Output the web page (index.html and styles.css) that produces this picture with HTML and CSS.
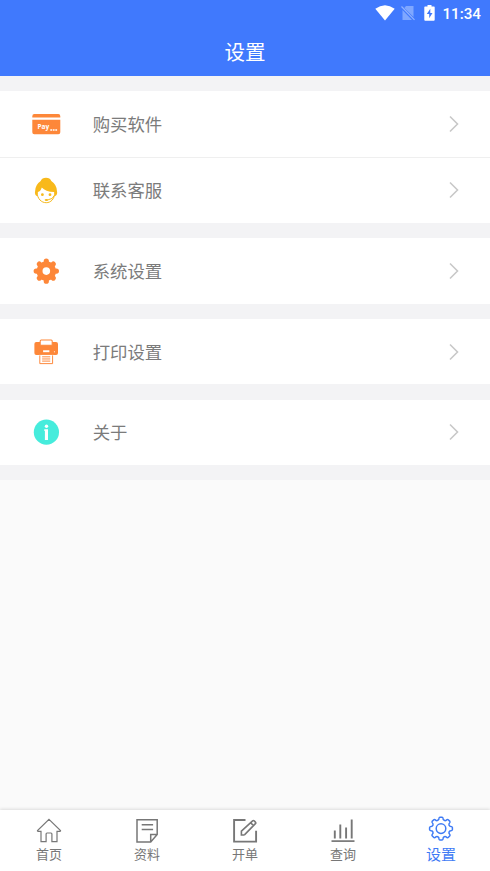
FILE: index.html
```html
<!DOCTYPE html>
<html lang="zh-CN">
<head>
<meta charset="utf-8">
<title>设置</title>
<link rel="stylesheet" href="styles.css">
</head>
<body>
<div class="screen">
  <header class="header">
    <div class="status">
      <svg class="wifi" width="20" height="16" viewBox="0 0 20 16"><path fill="#fff" d="M.3 3.7Q10-3.4 19.7 3.7L10 15.5z"/></svg>
      <svg class="sim" width="14" height="16" viewBox="0 0 14 16"><path fill="#7fa7ff" d="M5 1h7.5v11L3.3 3zM1.5 5l9.5 10H1.5z"/><path d="M.5 1.5l13 13.3" stroke="#91b3ff" stroke-width="1.2"/></svg>
      <svg class="battery" width="11" height="16" viewBox="0 0 11 16"><path fill="#fff" d="M3.5 0h4v1.5H10q.7 0 .7.7v12.6q0 .9-.9.9H1.2q-.9 0-.9-.9V2.2q0-.7.7-.7h2.5z"/><path fill="#4079fd" d="M6.3 3.7L2.8 9h2.4v4.2L8.5 8H6.3z"/></svg>
      <span class="clock">11:34</span>
    </div>
    <h1 class="title">设置</h1>
  </header>

  <main class="list">
    <section class="group">
      <div class="row">
        <svg class="icon" width="30" height="30" viewBox="0 0 30 30"><path fill="#fd8739" d="M1.3 8.6V7.3q0-2.3 2-2.3h24q2 0 2 2.2v1.4zM1.3 10.8h28v12.4q0 2-2 2h-24q-2 0-2-2z"/><text class="pay" x="6.5" y="20.3">Pay</text><path d="M19.3 20.9h7" stroke="#fff" stroke-width="1.5" stroke-dasharray="1.8 .7"/></svg>
        <span class="label">购买软件</span>
        <svg class="arrow" width="10" height="18" viewBox="0 0 10 18"><path d="M1 1.5L8.5 9 1 16.5"/></svg>
      </div>
      <div class="row">
        <svg class="icon" width="30" height="30" viewBox="0 0 30 30"><path d="M6 17.5c.5 6.5 4.5 10.2 9.2 10.2s8.3-3.7 8.8-10.2" fill="#fff" stroke="#f6b91c" stroke-width="1"/><path fill="#f8b91b" d="M9.7 6Q11 2.8 15 2.8T20.3 6Q25.7 9.5 26 16.2l.2 1.8q-.2 2.7-2.3 3.2l-.8-4.1q-8.7-.4-12.3-4.6Q9.5 16.5 6.9 17l-.8 4.2Q4 20.5 3.9 18l.2-1.7Q4.3 9.5 9.7 6z"/><circle cx="11.4" cy="19.7" r="1.4" fill="#f6b91c"/><circle cx="19" cy="19.7" r="1.4" fill="#f6b91c"/><path d="M23.2 20.5q-1.2 3.9-6 4.2" fill="none" stroke="#f6b91c"/><ellipse cx="15.5" cy="24.9" rx="1.9" ry="1" fill="#f6b91c"/></svg>
        <span class="label">联系客服</span>
        <svg class="arrow" width="10" height="18" viewBox="0 0 10 18"><path d="M1 1.5L8.5 9 1 16.5"/></svg>
      </div>
    </section>
    <section class="group">
      <div class="row">
        <svg class="icon" width="30" height="30" viewBox="0 0 30 30"><g stroke="#fd8739" stroke-width="5.2" stroke-linecap="round"><path d="M15.3 5v20.2M5.2 15.1h20.2M8.3 8.1l14 14M22.3 8.1l-14 14"/></g><circle cx="15.3" cy="15.1" r="9.8" fill="#fd8739"/><circle cx="15.3" cy="15.1" r="3.8" fill="#fff"/></svg>
        <span class="label">系统设置</span>
        <svg class="arrow" width="10" height="18" viewBox="0 0 10 18"><path d="M1 1.5L8.5 9 1 16.5"/></svg>
      </div>
    </section>
    <section class="group">
      <div class="row">
        <svg class="icon" width="30" height="30" viewBox="0 0 30 31"><rect x="3" y="5.2" width="24.4" height="13.3" rx="2" fill="#fd8739"/><path d="M9 8.5V4.1q0-1 1-1h10.4q1 0 1 1v4.4z" fill="#fff" stroke="#fd8739" stroke-width="1.1"/><path d="M12 14.7h6.5" stroke="#fff" stroke-width="2"/><circle cx="23.7" cy="15.2" r=".6" fill="#fff"/><path d="M7.5 18.5h15.4v10H7.5z" fill="#fff"/><path d="M8.6 19v8.5h13.2V19M11 20.5h8.4M11 22.7h8.4M11 24.9h8.4" fill="none" stroke="#fd8739" stroke-width="1"/></svg>
        <span class="label">打印设置</span>
        <svg class="arrow" width="10" height="18" viewBox="0 0 10 18"><path d="M1 1.5L8.5 9 1 16.5"/></svg>
      </div>
    </section>
    <section class="group">
      <div class="row">
        <svg class="icon" width="30" height="30" viewBox="0 0 30 30"><circle cx="15.4" cy="15.2" r="12.6" fill="#46ecdc"/><circle cx="15.5" cy="9.3" r="1.7" fill="#fff"/><path d="M14 12.2h3V23h-3.1v-9h-.6v-1.8z" fill="#fff"/></svg>
        <span class="label">关于</span>
        <svg class="arrow" width="10" height="18" viewBox="0 0 10 18"><path d="M1 1.5L8.5 9 1 16.5"/></svg>
      </div>
    </section>
  </main>

  <nav class="tabs">
    <a class="tab">
      <svg width="28" height="26" viewBox="0 0 28 26"><path d="M14 1.4L25.5 12.5q.3.9-.7.9H22v10.3h-5.1v-7.8q0-.9-.9-.9h-4q-.9 0-.9.9v7.8H6V13.4H3.2q-1 0-.7-.9z" stroke-width="1.2"/></svg>
      <span>首页</span>
    </a>
    <a class="tab">
      <svg width="28" height="26" viewBox="0 0 28 26"><path d="M4 1.8h20.2v14.6l-6.5 7.6H4zM17.7 24v-7.6h6.5M8.7 6.7h11.4M8.7 11.5h11.4" stroke-width="1.5"/></svg>
      <span>资料</span>
    </a>
    <a class="tab">
      <svg width="28" height="26" viewBox="0 0 28 26"><path d="M14.5 2H3.1v21.6h22V12.8" stroke-width="1.9"/><path d="M10.4 17v-3.9L21.6 2.8q.8-.6 1.6.1l1.2 1.2q.8.8 0 1.5L13.7 16.6q-.5.4-3.3.4zM19.8 4.9l2.8 2.8" stroke-width="1.6"/></svg>
      <span>开单</span>
    </a>
    <a class="tab">
      <svg width="28" height="26" viewBox="0 0 28 26"><path d="M2.5 23.1h23" stroke-width="1.7"/><path d="M5.8 12.5v8M11.3 6.5v14M17.1 9.5v11M22.7 1.6v18.9" stroke-width="1.9"/></svg>
      <span>查询</span>
    </a>
    <a class="tab active">
      <svg width="28" height="26" viewBox="-14 -12.6 28 26"><path d="M-2.3-9Q-2-11.4-1.2-11.4H1.2Q2-11.4 2.3-9Q3.5-7.6 4.7-8Q6.6-9.5 7.2-8.9L8.9-7.2Q9.5-6.6 8-4.7Q7.6-3.5 9-2.3Q11.4-2 11.4-1.2V1.2Q11.4 2 9 2.3Q7.6 3.5 8 4.7Q9.5 6.6 8.9 7.2L7.2 8.9Q6.6 9.5 4.7 8Q3.5 7.6 2.3 9Q2 11.4 1.2 11.4H-1.2Q-2 11.4-2.3 9Q-3.5 7.6-4.7 8Q-6.6 9.5-7.2 8.9L-8.9 7.2Q-9.5 6.6-8 4.7Q-7.6 3.5-9 2.3Q-11.4 2-11.4 1.2V-1.2Q-11.4-2-9-2.3Q-7.6-3.5-8-4.7Q-9.5-6.6-8.9-7.2L-7.2-8.9Q-6.6-9.5-4.7-8Q-3.5-7.6-2.3-9z" stroke-width="1.5"/><circle r="4.8" stroke-width="1.5"/></svg>
      <span>设置</span>
    </a>
  </nav>
</div>
</body>
</html>
```
FILE: styles.css
```css
* { box-sizing: border-box; }

body {
  margin: 0;
  font-family: "Noto Sans CJK SC", "Noto Sans", sans-serif;
}

.screen {
  display: flex;
  flex-direction: column;
  width: 490px;
  height: 871px;
  background: #fafafa;
}

.header {
  height: 76px;
  background: #4079fd;
  color: #fff;
}

.status {
  display: flex;
  align-items: center;
  justify-content: flex-end;
  height: 26px;
  padding-right: 9px;
}

.sim { margin-left: 6px; }
.battery { margin-left: 9px; }

.clock {
  margin-left: 7px;
  padding-top: 2px;
  font: 500 15.2px/26px Roboto, sans-serif;
}

.title {
  margin: 0;
  text-align: center;
  font-size: 20.5px;
  font-weight: 400;
  line-height: 50px;
}

.list {
  display: flex;
  flex-direction: column;
  gap: 15.3px;
  padding: 15.3px 0;
  background: #f3f3f5;
}

.group { background: #fff; }

.row {
  display: flex;
  align-items: center;
  height: 65.4px;
  padding: 0 31px;
}

.row + .row {
  height: 66.4px;
  border-top: 1px solid #efefef;
}

.label {
  flex: 1;
  margin-left: 31.7px;
  color: #7b7b7b;
  font-size: 17.4px;
  line-height: 26px;
}

.arrow path {
  fill: none;
  stroke: #c8c8c8;
  stroke-width: 1.6;
}

.pay {
  fill: #fff;
  font: 700 6.5px "Open Sans", sans-serif;
}

.tabs {
  display: flex;
  height: 61px;
  margin-top: auto;
  background: #fff;
  box-shadow: 0 -1px 3px rgba(0, 0, 0, .12);
}

.tab {
  display: flex;
  flex: 1;
  flex-direction: column;
  align-items: center;
  padding-top: 8px;
  color: #777;
  font-size: 13px;
  line-height: 20px;
}

.tab svg {
  fill: none;
  stroke: currentColor;
}

.active {
  padding-top: 6px;
  color: #3f7bf5;
  font-size: 15px;
  line-height: 24px;
}
```
